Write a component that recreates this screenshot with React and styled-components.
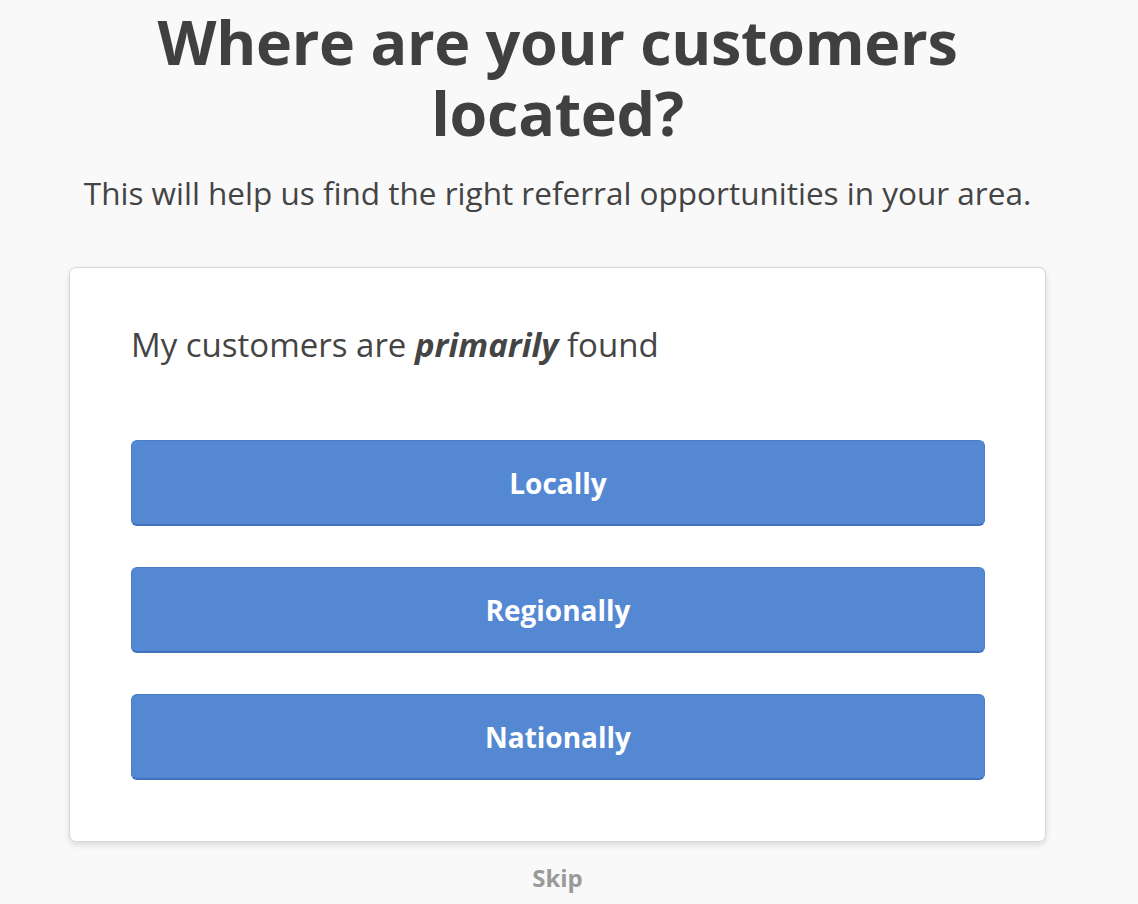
import styled, { createGlobalStyle } from "styled-components";

const GlobalStyle = createGlobalStyle`
  body {
    margin: 0;
    background-color: #f9f9f9;
    font-family: "Open Sans", Lato, sans-serif;
    color: #444444;
  }
`;

const Page = styled.div`
  width: 1115px;
  display: flex;
  flex-direction: column;
  align-items: center;
  padding-top: 6px;
`;

const Titulo = styled.h1`
  margin: 0;
  width: 900px;
  text-align: center;
  font-size: 61px;
  line-height: 71px;
  font-weight: 700;
  letter-spacing: -0.3px;
  color: #404040;
`;

const Subtitulo = styled.p`
  margin: 25px 0 0;
  font-size: 31.5px;
  line-height: 40px;
  color: #444444;
`;

const Card = styled.div`
  box-sizing: border-box;
  width: 977px;
  margin-top: 54px;
  padding: 57px 60px 61px 61px;
  background-color: #ffffff;
  border: 1px solid #d6d6d6;
  border-radius: 7px;
  box-shadow: 0px 3px 6px rgba(0, 0, 0, 0.12);
  display: flex;
  flex-direction: column;
`;

const Pergunta = styled.p`
  margin: 0 0 75px;
  font-size: 33px;
  line-height: 40px;
  color: #444444;

  em {
    font-weight: 700;
    font-style: italic;
  }
`;

const Opcoes = styled.div`
  display: flex;
  flex-direction: column;
  gap: 41px;
`;

const Opcao = styled.button`
  height: 86px;
  border: 1px solid #4a7cc8;
  border-bottom: 2px solid #4272bd;
  border-radius: 6px;
  background-color: #5588d2;
  color: #ffffff;
  font-family: inherit;
  font-size: 28px;
  font-weight: 700;
  cursor: pointer;
  &:hover {
    background-color: #4a7cc8;
  }
`;

const Pular = styled.a`
  margin-top: 19px;
  font-size: 24px;
  font-weight: 700;
  color: #9a9a9a;
  cursor: pointer;
`;

const opcoes = ["Locally", "Regionally", "Nationally"];

const App = () => {
  return (
    <>
      <GlobalStyle />
      <Page>
        <Titulo>Where are your customers located?</Titulo>
        <Subtitulo>
          This will help us find the right referral opportunities in your area.
        </Subtitulo>
        <Card>
          <Pergunta>
            My customers are <em>primarily</em> found
          </Pergunta>
          <Opcoes>
            {opcoes.map((o) => (
              <Opcao key={o}>{o}</Opcao>
            ))}
          </Opcoes>
        </Card>
        <Pular>Skip</Pular>
      </Page>
    </>
  );
};

export default App;
